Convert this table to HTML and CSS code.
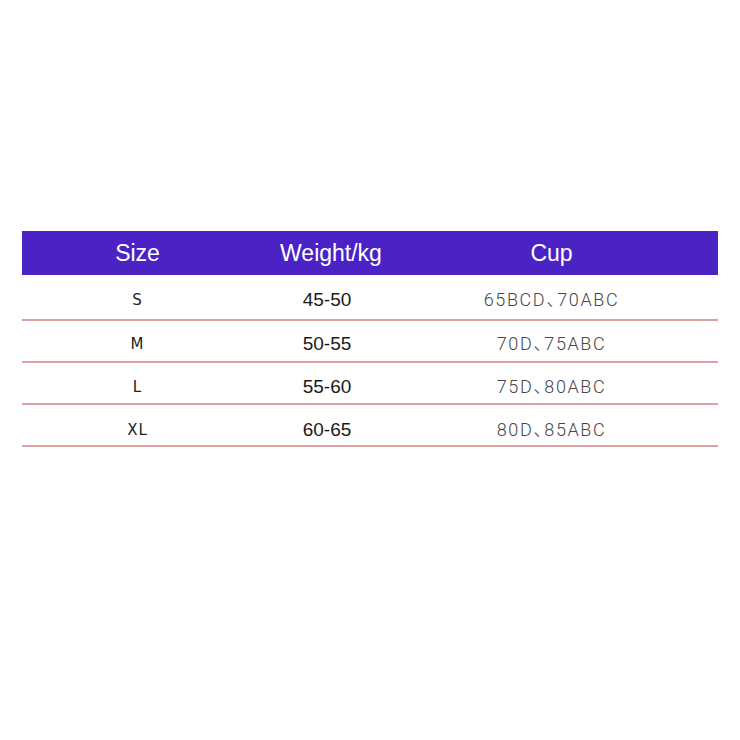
FILE: index.html
```html
<!DOCTYPE html>
<html lang="en">
<head>
<meta charset="utf-8">
<link rel="stylesheet" href="styles.css">
</head>
<body>
<div class="page">
  <div class="chart">
    <div class="row head">
      <div class="cell">Size</div>
      <div class="cell">Weight/kg</div>
      <div class="cell">Cup</div>
    </div>
    <div class="row r1">
      <div class="cell size">S</div>
      <div class="cell weight">45-50</div>
      <div class="cell cup">65BCD<span class="sep">、</span>70ABC</div>
    </div>
    <div class="row r2">
      <div class="cell size">M</div>
      <div class="cell weight">50-55</div>
      <div class="cell cup">70D<span class="sep">、</span>75ABC</div>
    </div>
    <div class="row r3">
      <div class="cell size">L</div>
      <div class="cell weight">55-60</div>
      <div class="cell cup">75D<span class="sep">、</span>80ABC</div>
    </div>
    <div class="row r4">
      <div class="cell size">XL</div>
      <div class="cell weight">60-65</div>
      <div class="cell cup">80D<span class="sep">、</span>85ABC</div>
    </div>
  </div>
</div>
</body>
</html>
```
FILE: styles.css
```css
html, body {
  margin: 0;
  padding: 0;
  background: #ffffff;
}
.page {
  width: 740px;
  height: 740px;
  box-sizing: border-box;
  padding: 231px 22px 0 22px;
}
.chart {
  width: 696px;
}
.row {
  display: grid;
  grid-template-columns: 231px 156px 285px 24px;
  height: 42px;
  box-sizing: border-box;
  border-bottom: 2px solid #dca2a4;
  align-items: center;
}
.row .cell {
  text-align: center;
  line-height: 20px;
  height: 20px;
}
.row.head {
  height: 44px;
  background: #4b23c5;
  border-bottom: none;
}
.row.head .cell {
  color: #ffffff;
  font-family: "Liberation Sans", Arial, sans-serif;
  font-size: 23px;
  line-height: 24px;
  height: 24px;
  padding-top: 0;
}
.row.r1 { height: 46px; }
.row.r1 .cell { padding-top: 6px; }
.row.r2 .cell { padding-top: 6px; }
.row.r3 .cell { padding-top: 8px; }
.row.r4 .cell { padding-top: 10px; }
.size {
  font-family: "DejaVu Sans", sans-serif;
  font-size: 15px;
  color: #222222;
  letter-spacing: 1px;
}
.weight {
  font-family: "Liberation Sans", Arial, sans-serif;
  font-size: 19px;
  color: #1a1a1a;
  padding-right: 8px;
}
.cup {
  font-family: Roboto, "Noto Sans CJK SC", sans-serif;
  font-weight: 300;
  font-size: 18px;
  color: #474747;
  letter-spacing: 1.6px;
}
.sep {
  font-family: "Noto Sans CJK SC", sans-serif;
  line-height: 0;
  letter-spacing: -8px;
  margin-right: 1px;
}
```
